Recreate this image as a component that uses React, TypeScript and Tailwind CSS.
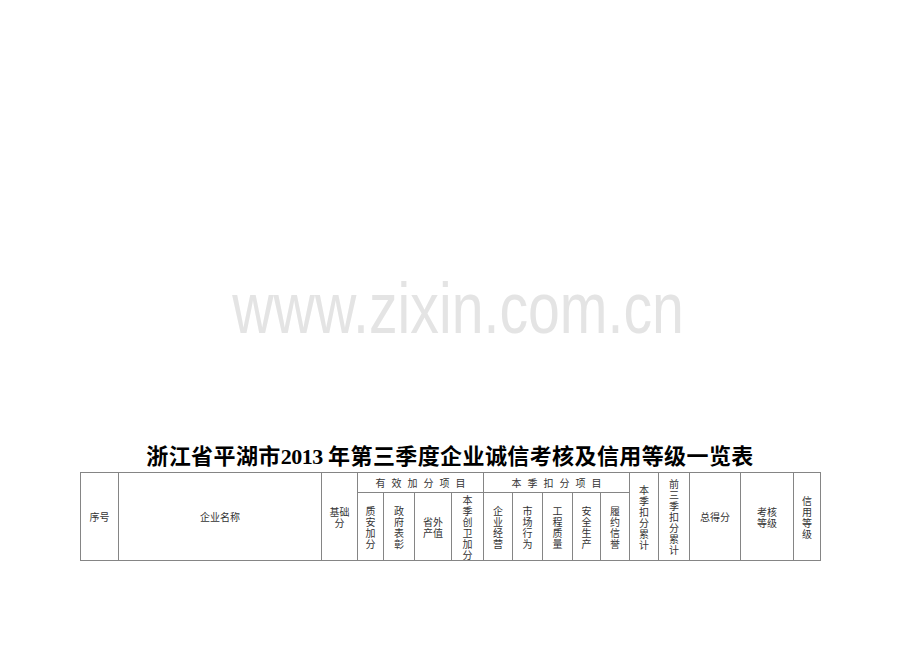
const cjk = "font-['Noto_Sans_CJK_SC',sans-serif]";

type Cell = {
  text: string;
  rowSpan?: number;
};

const colWidths = [38, 203, 36, 26, 31, 37, 32, 29, 30, 30, 28, 29, 29, 31, 51, 53, 27];

// "\n" marks a line break inside a cell
const headLeft: Cell[] = [
  { text: "序号", rowSpan: 2 },
  { text: "企业名称", rowSpan: 2 },
  { text: "基础\n分", rowSpan: 2 },
];

const headRight: Cell[] = [
  { text: "本\n季\n扣\n分\n累\n计", rowSpan: 2 },
  { text: "前\n三\n季\n扣\n分\n累\n计", rowSpan: 2 },
  { text: "总得分", rowSpan: 2 },
  { text: "考核\n等级", rowSpan: 2 },
  { text: "信\n用\n等\n级", rowSpan: 2 },
];

const subCols = [
  "质\n安\n加\n分",
  "政\n府\n表\n彰",
  "省外\n产值",
  "本\n季\n创\n卫\n加\n分",
  "企\n业\n经\n营",
  "市\n场\n行\n为",
  "工\n程\n质\n量",
  "安\n全\n生\n产",
  "履\n约\n信\n誉",
];

function CellText({ text }: { text: string }) {
  return <span className="block whitespace-pre-line leading-[11px]">{text}</span>;
}

const td = "border border-[#858585] p-0 align-middle text-center overflow-hidden";

export default function App() {
  return (
    <div className={`w-[920px] h-[651px] bg-white overflow-hidden ${cjk}`}>
      <div className="pt-[272px] flex justify-center">
        <div className="ml-[-3px] text-[72px] leading-none text-[#e4e4e4] font-['Liberation_Sans',sans-serif] scale-x-[0.795] whitespace-nowrap">
          www.zixin.com.cn
        </div>
      </div>

      <div className="ml-[80px] w-[740px]">
        <h1 className="mt-[98px] text-center text-[22px] leading-[24px] font-bold tracking-[0.4px] text-black whitespace-nowrap">
          浙江省平湖市<span className="font-['Liberation_Serif',serif] tracking-[-0.5px]">2013</span> 年第三季度企业诚信考核及信用等级一览表
        </h1>

        <table className="mt-[3px] w-[740px] table-fixed border-collapse text-[10px] text-[#333]">
          <colgroup>
            {colWidths.map((w, i) => (
              <col key={i} style={{ width: w }} />
            ))}
          </colgroup>
          <tbody>
            <tr className="h-[20px]">
              {headLeft.map((c, i) => (
                <td key={i} rowSpan={c.rowSpan} className={td}>
                  <CellText text={c.text} />
                </td>
              ))}
              <td colSpan={4} className={td}>
                <span className="leading-[12px] tracking-[6px] pl-[6px]">有效加分项目</span>
              </td>
              <td colSpan={5} className={td}>
                <span className="leading-[12px] tracking-[6px] pl-[6px]">本季扣分项目</span>
              </td>
              {headRight.map((c, i) => (
                <td key={i} rowSpan={c.rowSpan} className={td}>
                  <CellText text={c.text} />
                </td>
              ))}
            </tr>
            <tr className="h-[68px]">
              {subCols.map((text, i) => (
                <td key={i} className={td}>
                  <CellText text={text} />
                </td>
              ))}
            </tr>
          </tbody>
        </table>
      </div>
    </div>
  );
}
